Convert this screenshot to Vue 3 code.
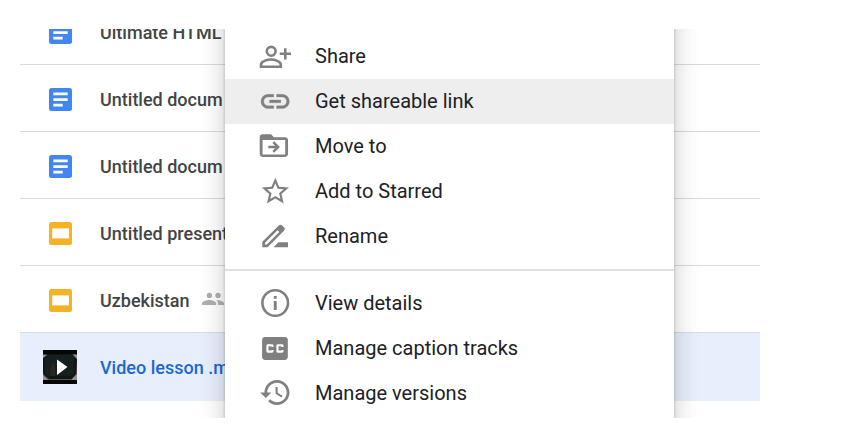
<script setup>
const files = [
  { id: 1, name: 'Ultimate HTML', type: 'doc' },
  { id: 2, name: 'Untitled docum', type: 'doc' },
  { id: 3, name: 'Untitled docum', type: 'doc' },
  { id: 4, name: 'Untitled present', type: 'slides' },
  { id: 5, name: 'Uzbekistan', type: 'slides', shared: true },
  { id: 6, name: 'Video lesson .m', type: 'video', selected: true },
]

const groups = [
  [
    { label: 'Share', icon: 'share' },
    { label: 'Get shareable link', icon: 'link', active: true },
    { label: 'Move to', icon: 'move' },
    { label: 'Add to Starred', icon: 'star' },
    { label: 'Rename', icon: 'rename' },
  ],
  [
    { label: 'View details', icon: 'info' },
    { label: 'Manage caption tracks', icon: 'captions' },
    { label: 'Manage versions', icon: 'history' },
  ],
]
</script>

<template>
  <main class="drive">
    <ul class="files">
      <li v-for="file in files" :key="file.id" class="file" :class="{ selected: file.selected }">
        <span class="file-icon">
          <svg v-if="file.type === 'doc'" width="23" height="23" viewBox="0 0 23 23" aria-hidden="true">
            <rect width="23" height="23" rx="2.5" fill="#4285f4" />
            <path d="M4.3 4.6h14.4v2.7H4.3zM4.3 10.2h14.4v2.7H4.3zM4.3 15.8h9.4v2.7H4.3z" fill="#fff" />
          </svg>
          <svg v-else-if="file.type === 'slides'" width="23" height="23" viewBox="0 0 23 23" aria-hidden="true">
            <rect width="23" height="23" rx="2.5" fill="#f5b324" />
            <path d="M3.2 6.4h16.8v10H3.2z" fill="#fff" />
          </svg>
          <svg v-else width="34" height="34" viewBox="0 0 34 34" aria-hidden="true">
            <rect width="34" height="34" fill="#050606" />
            <rect y="4" width="34" height="26" fill="#5b5252" />
            <path d="M0 5l5-1h23l6 2v4l-1 14-4 5H6l-5-4L0 22z" fill="#101617" />
            <rect x="2" y="5" width="29" height="21" rx="4" fill="#14201f" />
            <path d="M7 26l1-9 2-5 2 6v8z" fill="#30241f" />
            <path d="M0 25l5 5H0zM34 24l-6 6h6zM0 5h4L0 8zM34 5h-4l4 4z" fill="#99908d" />
            <path d="M14 9.5L24.5 17 14 25z" fill="#fff" />
          </svg>
        </span>
        <span class="file-name">{{ file.name }}</span>
        <svg v-if="file.shared" class="shared" width="24" height="24" viewBox="0 0 24 24" role="img" aria-label="Shared">
          <circle cx="8.4" cy="7.4" r="2.7" />
          <circle cx="17" cy="7.4" r="2.7" />
          <path d="M1 17v-1.300c0-2.400 4.600-3.700 7.300-3.700s7 1.300 7 3.700V17zM17 17v-1.500c0-1.300-.6-2.400-1.700-3.300 3.300-.4 7.700 1.100 7.700 3.500V17z" />
        </svg>
      </li>
    </ul>

    <div class="menu" role="menu">
      <div v-for="(group, index) in groups" :key="index" class="group" role="group">
        <button
          v-for="item in group"
          :key="item.label"
          type="button"
          role="menuitem"
          class="item"
          :class="{ active: item.active }"
        >
          <svg class="item-icon" width="33" height="33" viewBox="0 0 33 33" aria-hidden="true">
            <g v-if="item.icon === 'share'" fill="none" stroke="currentColor" stroke-width="2.6">
              <circle cx="12.2" cy="11.3" r="4.4" />
              <path d="M2 26.7v-2.3c0-3 6.3-4.9 9.9-4.9s9.9 1.9 9.9 4.9v2.3zM20.7 13.8H32M26.3 8.2v11.3" />
            </g>
            <g v-else-if="item.icon === 'link'" transform="translate(-.8 -.6) scale(1.415)">
              <path stroke="currentColor" stroke-width=".2" d="M3.9 12c0-1.71 1.39-3.1 3.1-3.1h4V7H7c-2.76 0-5 2.24-5 5s2.24 5 5 5h4v-1.9H7c-1.71 0-3.1-1.39-3.1-3.1zM8 13h8v-2H8v2zm9-6h-4v1.9h4c1.71 0 3.1 1.39 3.1 3.1s-1.39 3.1-3.1 3.1h-4V17h4c2.76 0 5-2.24 5-5s-2.24-5-5-5z" />
            </g>
            <g v-else-if="item.icon === 'move'">
              <path transform="translate(-2.1 -1.36) scale(1.415)" d="M20 6h-8l-2-2H4c-1.1 0-2 .9-2 2v12c0 1.1.9 2 2 2h16c1.1 0 2-.9 2-2V8c0-1.1-.9-2-2-2zm0 12.2H4V8h16v10.2z" />
              <path d="M9.3 17h9.5M14.3 12.2l4.8 4.8-4.8 4.8" fill="none" stroke="currentColor" stroke-width="2.5" />
            </g>
            <path
              v-else-if="item.icon === 'star'"
              transform="scale(1.36)"
              d="M22 9.24l-7.19-.62L12 2 9.19 8.63 2 9.24l5.46 4.73L5.82 21 12 17.27 18.18 21l-1.63-7.03L22 9.24zM12 15.4l-3.76 2.27 1-4.28-3.32-2.88 4.38-.38L12 6.1l1.71 4.04 4.38.38-3.32 2.88 1 4.28L12 15.4z"
            />
            <g v-else-if="item.icon === 'rename'">
              <path fill-rule="evenodd" d="M3.3 27.3v-5.5L19.7 5.4c1-1 2.4-1 3.4 0l1.9 1.900c1 1 1 2.400 0 3.400L8.600 27.300zM6 24.500h1.800L20.300 12 18.500 10.200 6 22.700z" />
              <path d="M14.500 27.300l5-5H29v5z" />
            </g>
            <g v-else-if="item.icon === 'info'">
              <circle cx="16.2" cy="16" r="12.8" fill="none" stroke="currentColor" stroke-width="2.6" />
              <path d="M14.8 9h2.9v2.8h-2.9zM14.8 14h2.9v9h-2.9z" />
            </g>
            <path
              v-else-if="item.icon === 'captions'"
              transform="translate(-1.2 -.7) scale(1.43)"
              d="M19 4H5c-1.11 0-2 .9-2 2v12c0 1.1.89 2 2 2h14c1.1 0 2-.9 2-2V6c0-1.1-.9-2-2-2zm-8 7H9.5v-.5h-2v3h2V13H11v1c0 .55-.45 1-1 1H7c-.55 0-1-.45-1-1v-4c0-.55.45-1 1-1h3c.55 0 1 .45 1 1v1zm7 0h-1.5v-.5h-2v3h2V13H18v1c0 .55-.45 1-1 1h-3c-.55 0-1-.45-1-1v-4c0-.55.45-1 1-1h3c.55 0 1 .45 1 1v1z"
            />
            <path
              v-else
              transform="translate(-.1 -1.2) scale(1.39)"
              d="M13 3c-4.97 0-9 4.03-9 9H1l3.89 3.89.07.14L9 12H6c0-3.87 3.13-7 7-7s7 3.13 7 7-3.13 7-7 7c-1.93 0-3.68-.79-4.94-2.06l-1.42 1.42C8.27 19.99 10.51 21 13 21c4.97 0 9-4.03 9-9s-4.03-9-9-9zm-1 5v5l4.28 2.54.72-1.21-3.5-2.08V8H12z"
            />
          </svg>
          <span class="item-label">{{ item.label }}</span>
        </button>
      </div>
    </div>
  </main>
</template>

<style>
body {
  background: #fff;
}
</style>

<style scoped>
.drive {
  position: relative;
  box-sizing: border-box;
  height: calc(100vh - 53px);
  margin: 29px 90px 24px 20px;
  overflow: hidden;
  font-family: Roboto, 'Liberation Sans', sans-serif;
}

.files {
  display: flex;
  flex-direction: column;
  justify-content: flex-end;
  box-sizing: border-box;
  height: 100%;
  margin: 0;
  padding: 0 0 17px;
  list-style: none;
}

.file {
  display: flex;
  flex: none;
  align-items: center;
  box-sizing: border-box;
  height: 67px;
  padding: 2px 0 0 20px;
  border-bottom: 1px solid #d8dbde;
  color: #444;
  font-size: 18px;
  font-weight: 500;
  line-height: 24px;
  white-space: nowrap;
}

.file.selected {
  height: 68px;
  padding-top: 0;
  border-bottom: 0;
  background: #e8effc;
  color: #1967d2;
}

.file-icon {
  display: flex;
  justify-content: center;
  width: 40px;
  margin-right: 20px;
}

.file-name {
  padding-top: 2px;
}

.shared {
  margin-left: 11px;
  fill: #b0b0b0;
}

.menu {
  position: absolute;
  top: -40px;
  bottom: -40px;
  left: 205px;
  box-sizing: border-box;
  width: 449px;
  padding-top: 45px;
  background: #fff;
  box-shadow: 0 0 3px rgba(0, 0, 0, 0.22), 0 0 24px rgba(0, 0, 0, 0.22);
}

.group + .group {
  margin-top: 10px;
  padding-top: 10px;
  border-top: 2px solid #e0e0e0;
}

.item {
  display: flex;
  align-items: center;
  gap: 23px;
  width: 100%;
  height: 45px;
  padding: 0 34px;
  border: 0;
  background: transparent;
  color: #202124;
  font-family: inherit;
  font-size: 20px;
  line-height: 24px;
  text-align: left;
  cursor: pointer;
}

.item.active {
  background: #eee;
}

.item-label {
  padding-bottom: 1px;
}

.item-icon {
  flex: none;
  color: #808080;
  fill: currentColor;
}
</style>
